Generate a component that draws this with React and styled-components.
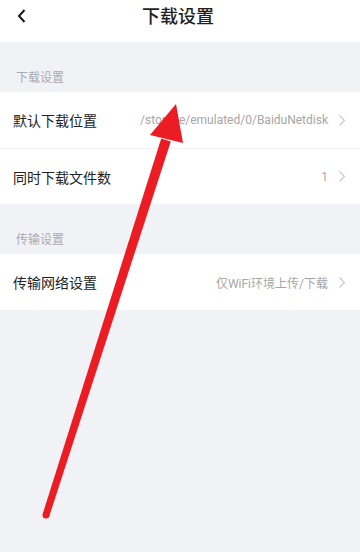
import React from 'react'
import styled, { createGlobalStyle } from 'styled-components'

const Global = createGlobalStyle`
  html, body { margin: 0; padding: 0; }
  body {
    background: #f1f2f6;
    font-family: Roboto, "Noto Sans CJK SC", "Noto Sans", sans-serif;
  }
`

const Page = styled.div`
  position: relative;
  width: 360px;
  height: 552px;
  background: #f1f2f6;
  overflow: hidden;
`

const Header = styled.div`
  height: 42px;
  background: #fff;
  display: flex;
  align-items: center;
  justify-content: center;
  position: relative;
`

const Back = styled.div`
  position: absolute;
  left: 15px;
  top: 8px;
  width: 12px;
  height: 16px;
  display: flex;
  align-items: center;
  justify-content: center;
`

const Title = styled.div`
  font-size: 18px;
  font-weight: 500;
  color: #1f1f1f;
  margin-top: -12px;
  margin-left: -4px;
`

const SectionLabel = styled.div`
  height: 50px;
  display: flex;
  align-items: flex-end;
  padding: 0 0 6px 16px;
  box-sizing: border-box;
  font-size: 12px;
  line-height: 16px;
  color: #a8abb3;
`

const Group = styled.div`
  background: #fff;
`

const Row = styled.div`
  height: 56px;
  display: flex;
  align-items: center;
  padding: 0 15px 0 13px;
  box-sizing: border-box;
  border-top: ${p => (p.$divider ? '1px solid #f2f2f4' : 'none')};
`

const Label = styled.div`
  flex: 1;
  font-size: 14px;
  color: #222;
`

const Value = styled.div`
  font-size: 12px;
  color: #a6a6a6;
  margin-right: 11px;
  white-space: nowrap;
`

const Arrow = styled.svg`
  position: absolute;
  left: 0;
  top: 0;
  pointer-events: none;
`

const Chevron = () => (
  <svg width="6" height="11" viewBox="0 0 6 11">
    <polyline points="0.5,0.5 5.5,5.5 0.5,10.5" fill="none" stroke="#c6c6c8" strokeWidth="1.1" />
  </svg>
)

const Item = ({ label, value, divider }) => (
  <Row $divider={divider}>
    <Label>{label}</Label>
    <Value>{value}</Value>
    <Chevron />
  </Row>
)

export default function App() {
  return (
    <Page>
      <Global />
      <Header>
        <Back>
          <svg width="9" height="14" viewBox="0 0 9 14">
            <polyline points="7.5,1 2,7 7.5,13" fill="none" stroke="#1a1a1a" strokeWidth="2" />
          </svg>
        </Back>
        <Title>下载设置</Title>
      </Header>

      <SectionLabel>下载设置</SectionLabel>
      <Group>
        <Item label="默认下载位置" value="/storage/emulated/0/BaiduNetdisk" />
        <Item label="同时下载文件数" value="1" divider />
      </Group>

      <SectionLabel>传输设置</SectionLabel>
      <Group>
        <Item label="传输网络设置" value="仅WiFi环境上传/下载" />
      </Group>

      <Arrow width="360" height="552" viewBox="0 0 360 552">
        <polygon points="42.7,513.9 49.3,516.1 170.8,141.5 161.2,138.5" fill="#ec1c24" />
        <circle cx="46" cy="515" r="3.5" fill="#ec1c24" />
        <polygon points="176,104 150,135 183,143" fill="#ec1c24" />
      </Arrow>
    </Page>
  )
}
